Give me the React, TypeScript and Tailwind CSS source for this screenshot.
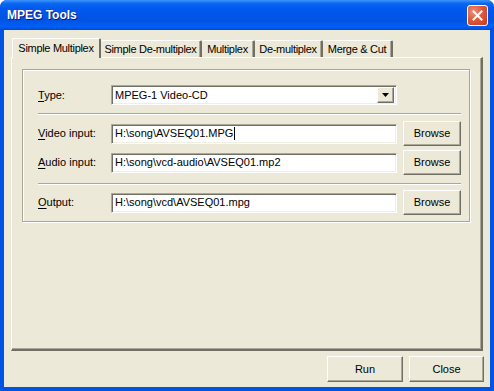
import React from "react";

const font = { fontFamily: '"Liberation Sans", Arial, sans-serif' };

export default function App() {
  return (
    <div className="w-[494px] h-[391px] flex flex-col bg-[#0054E3] rounded-t-[7px] overflow-hidden text-[11px] text-black" style={font}>
      {/* Title bar */}
      <div className="h-[30px] flex items-center justify-between pl-[7px] pr-[6px] bg-[linear-gradient(to_bottom,#3D95FF_0%,#0A66F0_12%,#0058EE_30%,#0054E3_70%,#0060F5_88%,#0048D8_100%)]">
        <span className="text-white font-bold text-[12px] [text-shadow:1px_1px_0_#0A1A80]">MPEG Tools</span>
        <CloseButton />
      </div>

      {/* Client area */}
      <div className="flex-1 mx-[4px] mb-[4px] bg-[#ECE9D8] flex flex-col">
        {/* Tabs */}
        <div className="flex items-end pl-[8px] pt-[8px] h-[27px]">
          <Tab label="Simple Multiplex" width="w-[89px]" active />
          <Tab label="Simple De-multiplex" width="w-[101px]" />
          <Tab label="Multiplex" width="w-[53px]" />
          <Tab label="De-multiplex" width="w-[68px]" />
          <Tab label="Merge & Cut" width="w-[70px]" />
        </div>

        {/* Tab panel */}
        <div className="mx-[7px] h-[294px] border-l border-t border-white border-r-2 border-b-2 border-r-[#716F64] border-b-[#716F64] shadow-[inset_-1px_-1px_0_#ACA899]">
          <div className="ml-[10px] mt-[11px] w-[448px] border border-[#ACA899] shadow-[inset_1px_1px_0_#fff,1px_1px_0_#fff] pl-[15px] pr-[8px] pt-[15px] pb-[6px]">
            <div className="flex items-center h-[20px]">
              <Label first="T" rest="ype:" />
              <div className="w-[286px] h-[20px] bg-white border border-t-[#ACA899] border-l-[#ACA899] border-r-white border-b-white shadow-[inset_1px_1px_0_#716F64,inset_-1px_-1px_0_#F1EFE2] flex items-center justify-between pl-[3px] pr-[2px]">
                <span>MPEG-1 Video-CD</span>
                <div className="w-[17px] h-[16px] bg-[#ECE9D8] border border-t-white border-l-white border-r-[#716F64] border-b-[#716F64] shadow-[inset_-1px_-1px_0_#ACA899] flex items-center justify-center">
                  <svg width="7" height="4" viewBox="0 0 7 4"><path d="M0 0h7L3.5 4z" fill="#000" /></svg>
                </div>
              </div>
            </div>
            <Separator className="mt-[8px]" />
            <Row first="V" rest="ideo input:" value="H:\song\AVSEQ01.MPG" caret className="mt-[6px]" />
            <Row first="A" rest="udio input:" value="H:\song\vcd-audio\AVSEQ01.mp2" className="mt-[4px]" />
            <Separator className="mt-[8px]" />
            <Row first="O" rest="utput:" value="H:\song\vcd\AVSEQ01.mpg" className="mt-[5px]" />
          </div>
        </div>

        {/* Bottom buttons */}
        <div className="flex justify-end gap-[6px] pr-[6px] mt-[5px]">
          <Button label="Run" className="w-[76px] h-[26px]" />
          <Button label="Close" className="w-[75px] h-[26px]" />
        </div>
      </div>
    </div>
  );
}

function Tab({ label, width, active }: { label: string; width: string; active?: boolean }) {
  if (active) {
    return (
      <div className={"relative z-10 -mb-[1px] h-[20px] flex items-center justify-center whitespace-nowrap tracking-[-0.3px] bg-[#ECE9D8] border-l border-t border-white border-r-2 border-r-[#716F64] rounded-t-[2px] " + width}>
        {label}
      </div>
    );
  }
  return (
    <div className={"h-[17px] flex items-center justify-center whitespace-nowrap tracking-[-0.3px] bg-[#ECE9D8] border-t border-white border-r-2 border-r-[#716F64] rounded-t-[2px] shadow-[inset_-1px_0_0_#ACA899] " + width}>
      {label}
    </div>
  );
}

function Label({ first, rest }: { first: string; rest: string }) {
  return (
    <div className="w-[73px] shrink-0">
      <span className="underline underline-offset-[2px]">{first}</span>
      {rest}
    </div>
  );
}

function Separator({ className }: { className?: string }) {
  return <div className={"h-[2px] w-[423px] border-t border-[#ACA899] border-b border-b-white " + (className ?? "")} />;
}

function Row({
  first,
  rest,
  value,
  caret,
  className,
}: {
  first: string;
  rest: string;
  value: string;
  caret?: boolean;
  className?: string;
}) {
  return (
    <div className={"flex items-center h-[25px] " + (className ?? "")}>
      <Label first={first} rest={rest} />
      <div className="w-[286px] h-[20px] bg-white border border-t-[#ACA899] border-l-[#ACA899] border-r-white border-b-white shadow-[inset_1px_1px_0_#716F64,inset_-1px_-1px_0_#F1EFE2] flex items-center pl-[3px]">
        <span>{value}</span>
        {caret && <span className="w-px h-[13px] bg-black ml-px" />}
      </div>
      <Button label="Browse" className="ml-[6px] w-[58px] h-[25px]" />
    </div>
  );
}

function Button({ label, className }: { label: string; className?: string }) {
  return (
    <div
      className={
        "flex items-center justify-center bg-[#ECE9D8] border border-t-white border-l-white border-r-[#716F64] border-b-[#716F64] shadow-[inset_-1px_-1px_0_#ACA899] " +
        (className ?? "")
      }
    >
      {label}
    </div>
  );
}

function CloseButton() {
  return (
    <div className="w-[21px] h-[21px] rounded-[3px] border border-white bg-[radial-gradient(circle_at_30%_30%,#F0907A_0%,#E0583A_45%,#C63A1C_100%)] flex items-center justify-center">
      <svg width="11" height="11" viewBox="0 0 11 11">
        <path d="M1.5 1.5l8 8M9.5 1.5l-8 8" stroke="#fff" strokeWidth="2" strokeLinecap="square" />
      </svg>
    </div>
  );
}
